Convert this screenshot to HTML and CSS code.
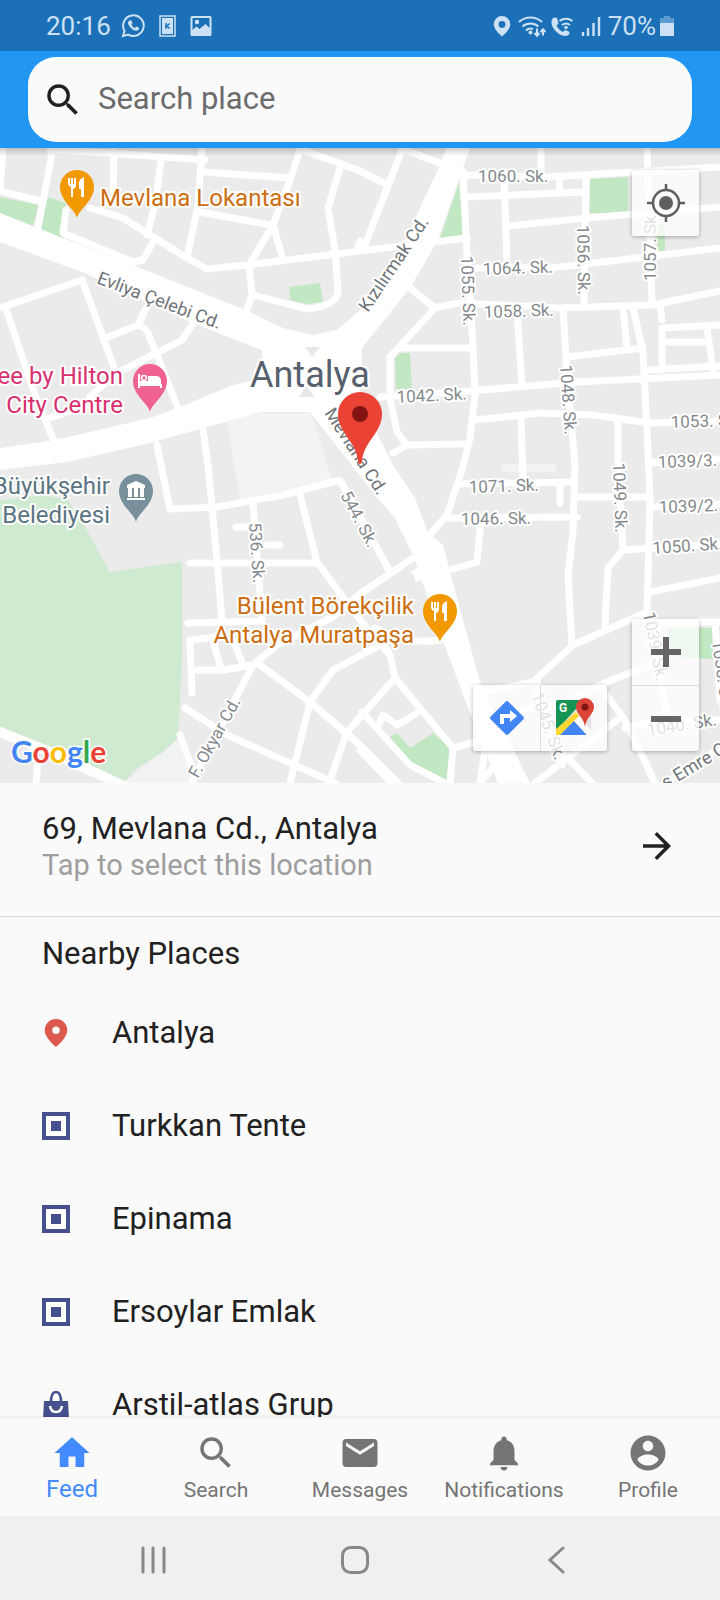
FILE: index.html
```html
<!DOCTYPE html>
<html lang="en">
<head>
<meta charset="utf-8">
<meta name="viewport" content="width=device-width, initial-scale=1">
<title>Search place</title>
<link rel="stylesheet" href="styles.css">
</head>
<body>
<div class="app">
  <div class="status">
    <div class="status-group">
      <span>20:16</span>
      <svg class="i24" viewBox="0 0 24 24" fill="none" stroke="currentColor"><path d="M2 22l1.500-5.200A10.300 10.300 0 1 1 7.300 20.600z" stroke-width="2"/><path d="M8.500 6.500c-2 1-2 3.500.5 6.500s5.500 4.500 7.500 3.500 1.700-2.700 1-3l-2-1-1.500 1.500c-1.500-.5-3-2-3.500-3.500L11.500 9l-1-2.200c-.4-.6-1.200-.6-2-.3z" fill="currentColor" stroke="none"/></svg>
      <svg class="i24" viewBox="0 0 24 24"><path d="M5 2h15v20H5z" fill="none" stroke="currentColor" stroke-width="1.500"/><path d="M7 4h11v16H7z" fill="currentColor"/><path d="M11 9v6M14.500 9.500L12 12l2.500 2.500" stroke="#1b70b8" stroke-width="1.500" fill="none"/></svg>
      <svg class="i24" viewBox="0 0 24 24"><path d="M3 2h18a1.500 1.500 0 0 1 1.500 1.500v17A1.500 1.500 0 0 1 21 22H3a1.500 1.500 0 0 1-1.500-1.500v-17A1.500 1.500 0 0 1 3 2zm.5 2v12l4-3.500 3 2.500 6-5 4 4V4z" fill="currentColor" fill-rule="evenodd"/><circle cx="8" cy="8" r="2.200" fill="currentColor"/></svg>
    </div>
    <div class="status-group status-right">
      <svg class="i24" viewBox="0 0 24 24"><path d="M12 2a8.300 8.300 0 0 0-8.300 8.300C3.700 16 12 22.500 12 22.500s8.300-6.500 8.300-12.200A8.300 8.300 0 0 0 12 2zm0 5a3.400 3.400 0 1 1 0 6.800A3.400 3.400 0 0 1 12 7z" fill="currentColor" fill-rule="evenodd"/></svg>
      <svg class="i28" viewBox="0 0 28 24" fill="none" stroke="currentColor" stroke-width="2"><path d="M1 8a17 17 0 0 1 23 0M4.500 12.500a12 12 0 0 1 16 0M8 16.500a7 7 0 0 1 7-1.500"/><circle cx="12.500" cy="18.500" r="2" fill="currentColor" stroke="none"/><path d="M19 14.500v7m-2.500-2.500 2.500 2.700 2.500-2.700M25 21.500v-6m-2.500 2.500 2.500-2.700 2.500 2.700"/></svg>
      <svg class="i24" viewBox="0 0 24 24"><path d="M4 3.500C0 6 1 12 5.500 17S16.500 23.500 19.500 20l-.5-2.500-4-1.500-2 2C10 16.500 7.500 14 6.500 11.500l2-2L7 4z" fill="currentColor"/><path d="M9.500 7a11 11 0 0 1 13 0M12 11a6.500 6.500 0 0 1 8 0" stroke="currentColor" stroke-width="2" fill="none"/><circle cx="16" cy="13.500" r="1.800" fill="currentColor"/></svg>
      <svg class="i24" viewBox="0 0 24 24" stroke="currentColor" stroke-width="2.400"><path d="M5 22v-4M10 22v-8M15.500 22V9M21 22V3"/></svg>
      <span class="battery-text">70%</span>
      <svg class="battery" viewBox="0 0 14 24"><path d="M4 2h6v2h4v5H0V4h4z" fill="#5b9bd2"/><path d="M0 9h14v12a1 1 0 0 1-1 1H1a1 1 0 0 1-1-1z" fill="currentColor"/></svg>
    </div>
  </div>

  <header class="header">
    <label class="search">
      <svg class="i42" viewBox="0 0 24 24"><path fill="currentColor" d="M15.500 14h-.79l-.28-.27A6.470 6.470 0 0 0 16 9.500 6.500 6.500 0 1 0 9.500 16c1.610 0 3.090-.59 4.230-1.570l.27.28v.79l5 4.990L20.490 19l-4.990-5zm-6 0C7.010 14 5 11.990 5 9.500S7.010 5 9.500 5 14 7.010 14 9.500 11.990 14 9.500 14z"/></svg>
      <input type="text" placeholder="Search place" aria-label="Search place">
    </label>
  </header>

  <section class="map" aria-label="Map">
    <svg class="map-canvas" viewBox="0 148 720 635" preserveAspectRatio="xMidYMid slice">
      <defs>
        <g id="pin"><path d="M0 31C-2 22-17 14-17 0A17 17 0 0 1 17 0C17 14 2 22 0 31z"/></g>
        <g id="food" fill="#fff"><path d="M-9-9h2v6h1v-6h2v6h1v-6h2v7q0 3-3 4v8h-2V0q-3-1-3-4zM2-4q0-4 5-6v20H4V2H2z"/></g>
      </defs>
      <rect y="148" width="720" height="635" fill="#ebebeb"/>
      <path fill="#f1f3f4" d="M227 420L260 413H312L332 480 240 500zM123 783L180 738 192 783zM502 464H556V472H502z"/>
      <path fill="#ceead0" d="M0 500L43 495 68 500 85 527 110 572 182 562V660L178 738 163 752 137 768 123 783 0 732z"/>
      <path fill="#c1e7c3" d="M0 197L38 205 33 226 0 214zM48 197L66 203 60 228 64 240 38 230zM289 287L320 283 323 302 307 304 290 300zM590 179L628 177V213H590zM657 225H665V251H657zM395 358L400 353H410L412 389H396zM459 183L440 238 463 236zM667 628H713L715 659 673 657zM397 733L410 748 433 733 450 748 446 783 407 762 390 737z"/>
      <g fill="none" stroke="#fff" stroke-width="7" stroke-linejoin="round" stroke-linecap="round">
        <path d="M3 148L0 190M53 148L38 228M0 191L40 201M50 150L110 153 205 160M114 152L113 190M161 160L155 205 147 235M202 148L198 205 187 258M203 172L290 178M200 212L270 225"/>
        <path d="M90 208L123 218 187 258 207 269 247 265 360 251 467 238M300 150L290 180 273 225 249 265 252 295 246 312M273 225L282 256M303 150L360 171 384 183M340 168L328 208 335 250 338 292Q336 306 307 309L253 295M66 210L63 233 133 262 143 260 154 240M360 241L357 250"/>
        <path d="M0 308L82 280 115 370M7 312L35 395 54 441M108 337L138 325Q148 328 150 338L178 408M138 325L146 308M90 397L115 374 182 340 192 325M50 418L100 400"/>
        <path d="M203 430L208 465 217 560 222 622M157 445L162 470 170 509 217 507 283 495 340 480 390 572M190 563H317M300 495L317 562 360 620 390 655M253 503L262 621M236 527H250M266 545H280M188 623L262 621"/>
        <path d="M192 693L190 640 215 637M213 642L221 668M197 670H223L253 665M233 640L243 665M192 782L253 665 277 645 333 617 360 594 413 558M257 663L310 702 360 745 398 783M185 708L227 735 335 783M290 783L310 702 333 670 390 640M330 780L347 732 395 678 390 655 375 630M375 628Q405 645 440 640M180 735L192 768M38 762L36 783"/>
        <path d="M362 712L410 765 445 783M395 678L453 748 450 783M453 748L490 738M377 728L383 715 397 725 417 713M485 750L480 783M360 750L395 787M495 765L480 783"/>
        <path d="M402 150L363 250M405 150L440 163M463 172L467 255 473 345 475 395 470 438 462 470 447 515 427 538M463 175L547 177 720 167M541 148V175M647 148L652 302M468 197L583 192M560 178L559 192M504 178L507 262M508 226L587 218 720 207M586 175L584 305M477 268L560 267 720 248"/>
        <path d="M432 308L460 303 560 308 653 305 720 291M410 288L435 308 390 357 390 398 397 432 407 445 393 453M400 348H470M380 397L470 391 577 382 720 375M407 445L467 444M517 312L522 385M563 308L567 375 575 465 573 532 568 575 572 645M567 357L643 348M623 308L627 348M633 308L643 352 648 450 650 500 648 578 647 612"/>
        <path d="M475 420L540 413 593 415 650 423 720 421M521 418L523 480M618 420V465L623 550 608 568 605 625M660 305L662 320M662 328L720 325M662 342H707M662 328V370M707 328L713 370M647 370L720 366M458 484L573 482M560 484V503M447 518L577 517M481 520L477 562 443 572M577 497H650M623 550L720 544M650 592L720 578M650 507L720 504M650 463L720 459"/>
        <path d="M478 693L533 682 573 645 647 612M537 680L547 730 562 765M500 712L560 705 607 682 650 665M603 690L625 720 655 783M535 783L620 718M565 755L592 783M650 622H720M650 622L668 720M625 728L665 720H720M655 790L720 748M715 622L720 700"/>
        <path stroke-width="10" d="M0 732L55 754 128 788"/>
      </g>
      <g fill="#fff">
        <path d="M0 213L63 238 130 264 250 312 283 328 313 335 337 330 360 310 397 258 440 165 446 148H470L438 240 410 288 362 348 360 400 393 465 415 498 428 533 443 545 457 598 480 682 530 783H498L467 705 442 638 413 555 395 518 375 495 310 412H260L150 443 67 462 0 470V448L55 440 150 418 180 407 233 385 262 378V350L190 322 82 272 0 242z"/>
        <path d="M411 571L420 567 427 578 416 582z"/>
      </g>
      <path fill="#e8e8e8" d="M305 347H320L312 357zM299 397H315L306 386z"/>

      <g class="street">
        <text transform="translate(96 283) rotate(20.700)" class="avenue">Evliya Çelebi Cd.</text>
        <text transform="translate(368 313) rotate(-56)" class="avenue">Kızılırmak Cd.</text>
        <text transform="translate(324 413) rotate(57)" class="avenue">Mevlana Cd.</text>
        <text transform="translate(198 779) rotate(-61)">F. Okyar Cd.</text>
        <text transform="translate(666 789) rotate(-31)" class="avenue">s Emre Cd.</text>
        <text transform="translate(478 182)">1060. Sk.</text>
        <text transform="translate(483 275) rotate(-2)">1064. Sk.</text>
        <text transform="translate(484 318) rotate(-2)">1058. Sk.</text>
        <text transform="translate(397 403) rotate(-3)">1042. Sk.</text>
        <text transform="translate(469 493) rotate(-2)">1071. Sk.</text>
        <text transform="translate(461 525) rotate(-1)">1046. Sk.</text>
        <text transform="translate(671 428) rotate(-2)">1053. Sk.</text>
        <text transform="translate(658 468) rotate(-2)">1039/3. Sk.</text>
        <text transform="translate(659 513) rotate(-2)">1039/2. Sk.</text>
        <text transform="translate(653 554) rotate(-4)">1050. Sk.</text>
        <text transform="translate(461 256) rotate(88)">1055. Sk.</text>
        <text transform="translate(577 225) rotate(89)">1056. Sk.</text>
        <text transform="translate(656 281) rotate(-90)">1057. Sk.</text>
        <text transform="translate(560 365) rotate(86)">1048. Sk.</text>
        <text transform="translate(613 463) rotate(88)">1049. Sk.</text>
        <text transform="translate(249 523) rotate(86)">536. Sk.</text>
        <text transform="translate(340 495) rotate(62)">544. Sk.</text>
        <text transform="translate(531 695) rotate(70)">1045. Sk.</text>
        <text transform="translate(643 613) rotate(79)">1039. Sk.</text>
        <text transform="translate(648 736) rotate(-9)">1040. Sk.</text>
        <text transform="translate(712 641) rotate(82)">1038. Sk.</text>
      </g>

      <g class="poi">
        <text x="100" y="206" fill="#cc6d12">Mevlana Lokantası</text>
        <text x="123" y="384" text-anchor="end" fill="#d8306f">ee by Hilton</text>
        <text x="123" y="413" text-anchor="end" fill="#d8306f">City Centre</text>
        <text x="110" y="494" text-anchor="end" fill="#5a7482">Büyükşehir</text>
        <text x="110" y="523" text-anchor="end" fill="#5a7482">Belediyesi</text>
        <text x="414" y="614" text-anchor="end" fill="#cc6d12">Bülent Börekçilik</text>
        <text x="414" y="643" text-anchor="end" fill="#cc6d12">Antalya Muratpaşa</text>
        <text x="250" y="387" class="city">Antalya</text>
      </g>

      <g transform="translate(77 187)"><use href="#pin" fill="#f29900"/><use href="#food"/></g>
      <g transform="translate(440 611)"><use href="#pin" fill="#f29900"/><use href="#food"/></g>
      <g transform="translate(150 381)"><use href="#pin" fill="#f06292"/><path d="M-11-7v14M-11 4H11V7" stroke="#fff" stroke-width="2" fill="none"/><path d="M-11 0H11V4H-11zM-2-5H6Q11-5 11 0H-2z" fill="#fff"/><circle cx="-6" cy="-3" r="2.500" fill="none" stroke="#fff" stroke-width="1.500"/></g>
      <g transform="translate(136 491)"><use href="#pin" fill="#78909c"/><path d="M0-10L9-6V-3H-9V-6zM-8-3H-4V6H-8zM-2-3H2V6H-2zM4-3H8V6H4zM-9 7H9V9H-9z" fill="#fff"/></g>
      <path d="M358 462C357 442 338 433 338 414A22 22 0 0 1 382 414C382 433 363 442 362 462Q360 466 358 462z" fill="#ea4335"/>
      <circle cx="360" cy="414" r="8" fill="#811411"/>
      <text x="11" y="763" class="google"><tspan fill="#4285f4">G</tspan><tspan fill="#ea4335">o</tspan><tspan fill="#fbbc04">o</tspan><tspan fill="#4285f4">g</tspan><tspan fill="#34a853">l</tspan><tspan fill="#ea4335">e</tspan></text>
    </svg>

    <div class="map-panel locate">
      <button type="button" aria-label="My location"><svg class="i42" viewBox="0 0 42 42" fill="none" stroke="#5f5f5f" stroke-width="2.500"><circle cx="21" cy="21" r="13"/><path d="M21 2v6M21 34v6M2 21h6M34 21h6"/><circle cx="21" cy="21" r="7" fill="#5f5f5f" stroke="none"/></svg></button>
    </div>
    <div class="map-panel zoom">
      <button type="button" aria-label="Zoom in"><svg class="i42" viewBox="0 0 42 42"><path d="M6 21h30M21 6v30" stroke="#666" stroke-width="6"/></svg></button>
      <button type="button" aria-label="Zoom out"><svg class="i42" viewBox="0 0 42 42"><path d="M6 21h30" stroke="#666" stroke-width="6"/></svg></button>
    </div>
    <div class="map-panel links">
      <button type="button" aria-label="Directions"><svg class="i42" viewBox="0 0 42 42"><rect x="8.500" y="8.500" width="25" height="25" rx="2" transform="rotate(45 21 21)" fill="#4285f4"/><path d="M16 27v-8h9" fill="none" stroke="#fff" stroke-width="4"/><path d="M24 13l7 6-7 6z" fill="#fff"/></svg></button>
      <button type="button" aria-label="Open in Google Maps"><svg class="i42" viewBox="0 0 42 42"><path d="M3 5a2 2 0 0 1 2-2h33v35H3z" fill="#e4e4e4"/><path d="M3 5a2 2 0 0 1 2-2h26L3 34z" fill="#159454"/><path d="M3 32L23 15l4 5L7 38H3z" fill="#fdd835"/><path d="M7 38L21 24 34 38z" fill="#4285f4"/><path d="M21 24L26 19 38 33V38H34z" fill="#fafafa"/><text x="6" y="15" class="g-mark">G</text><path d="M32 30C31 20 23 17 23 10A9 9 0 0 1 41 10C41 17 33 20 32 30z" fill="#db4437"/><circle cx="32" cy="10" r="3.500" fill="#811411"/></svg></button>
    </div>
  </section>

  <button type="button" class="selected">
    <span class="selected-text">
      <span class="selected-title">69, Mevlana Cd., Antalya</span>
      <span class="selected-hint">Tap to select this location</span>
    </span>
    <svg class="i42" viewBox="0 0 24 24"><path fill="currentColor" d="M12 4l-1.410 1.410L16.170 11H4v2h12.170l-5.580 5.590L12 20l8-8z"/></svg>
  </button>

  <main class="nearby">
    <h1>Nearby Places</h1>
    <ul>
      <li><svg class="i28" viewBox="0 0 28 28"><path d="M14 0A11.300 11.300 0 0 0 2.700 11.300C2.700 19 14 28 14 28s11.300-9 11.300-16.700A11.300 11.300 0 0 0 14 0zm0 7.500a3.800 3.800 0 1 1 0 7.600 3.800 3.800 0 0 1 0-7.600z" fill="#db5a4d" fill-rule="evenodd"/></svg><span>Antalya</span></li>
      <li><svg class="i28" viewBox="0 0 28 28"><path d="M2 2h24v24H2z" fill="#fff" stroke="#46508f" stroke-width="4"/><path d="M9 9h10v10H9z" fill="#46508f"/></svg><span>Turkkan Tente</span></li>
      <li><svg class="i28" viewBox="0 0 28 28"><path d="M2 2h24v24H2z" fill="#fff" stroke="#46508f" stroke-width="4"/><path d="M9 9h10v10H9z" fill="#46508f"/></svg><span>Epinama</span></li>
      <li><svg class="i28" viewBox="0 0 28 28"><path d="M2 2h24v24H2z" fill="#fff" stroke="#46508f" stroke-width="4"/><path d="M9 9h10v10H9z" fill="#46508f"/></svg><span>Ersoylar Emlak</span></li>
      <li><svg class="i28" viewBox="0 0 28 28"><path d="M2 10h24l1 18H1z" fill="#46508f"/><path d="M9 11Q9 1 14 1t5 10" fill="none" stroke="#46508f" stroke-width="2.500"/><path d="M8 15q1 6 6 6t6-6" fill="none" stroke="#fff" stroke-width="2.500"/></svg><span>Arstil-atlas Grup</span></li>
    </ul>
  </main>

  <nav class="tabs">
    <a href="#feed" class="active"><svg class="i42" viewBox="0 0 24 24"><path fill="currentColor" d="M10 20v-6h4v6h5v-8h3L12 3 2 12h3v8z"/></svg><span>Feed</span></a>
    <a href="#search"><svg class="i42" viewBox="0 0 24 24"><path fill="currentColor" d="M15.500 14h-.79l-.28-.27A6.470 6.470 0 0 0 16 9.500 6.500 6.500 0 1 0 9.500 16c1.610 0 3.090-.59 4.230-1.570l.27.28v.79l5 4.990L20.490 19l-4.990-5zm-6 0C7.010 14 5 11.990 5 9.500S7.010 5 9.500 5 14 7.010 14 9.500 11.990 14 9.500 14z"/></svg><span>Search</span></a>
    <a href="#messages"><svg class="i42" viewBox="0 0 24 24"><path fill="currentColor" d="M20 4H4c-1.100 0-1.990.9-1.990 2L2 18c0 1.100.9 2 2 2h16c1.100 0 2-.9 2-2V6c0-1.100-.9-2-2-2zm0 4l-8 5-8-5V6l8 5 8-5v2z"/></svg><span>Messages</span></a>
    <a href="#notifications"><svg class="i42" viewBox="0 0 24 24"><path fill="currentColor" d="M12 22c1.100 0 2-.9 2-2h-4c0 1.100.89 2 2 2zm6-6v-5c0-3.070-1.640-5.640-4.500-6.320V4c0-.83-.67-1.500-1.500-1.500s-1.500.67-1.500 1.500v.68C7.630 5.360 6 7.920 6 11v5l-2 2v1h16v-1l-2-2z"/></svg><span>Notifications</span></a>
    <a href="#profile"><svg class="i42" viewBox="0 0 24 24"><path fill="currentColor" d="M12 2C6.480 2 2 6.480 2 12s4.480 10 10 10 10-4.480 10-10S17.520 2 12 2zm0 3c1.660 0 3 1.340 3 3s-1.340 3-3 3-3-1.340-3-3 1.340-3 3-3zm0 14.200c-2.500 0-4.710-1.280-6-3.220.03-1.990 4-3.080 6-3.080 1.990 0 5.970 1.090 6 3.080-1.290 1.940-3.500 3.220-6 3.220z"/></svg><span>Profile</span></a>
  </nav>

  <div class="sysnav">
    <button type="button" aria-label="Recent apps"><svg class="i28" viewBox="0 0 28 28"><path d="M4 2v24M14 2v24M25 2v24" stroke="currentColor" stroke-width="3" stroke-linecap="round"/></svg></button>
    <button type="button" aria-label="Home"><svg class="i28" viewBox="0 0 28 28"><rect x="1.500" y="1.500" width="25" height="25" rx="8" fill="none" stroke="currentColor" stroke-width="3"/></svg></button>
    <button type="button" aria-label="Back"><svg class="i28" viewBox="0 0 28 28"><path d="M20 2L7 14l13 12" fill="none" stroke="currentColor" stroke-width="3" stroke-linecap="round"/></svg></button>
  </div>
</div>
</body>
</html>
```

FILE: styles.css
```css
* {
  box-sizing: border-box;
}

body {
  margin: 0;
  font-family: Roboto, "Liberation Sans", sans-serif;
  color: #212121;
  background: #fafafa;
}

button {
  padding: 0;
  border: 0;
  background: none;
  font: inherit;
  color: inherit;
}

svg {
  display: block;
  flex: none;
}

.i24 {
  width: 24px;
  height: 24px;
}

.i28 {
  width: 28px;
  height: 28px;
}

.i42 {
  width: 42px;
  height: 42px;
}

.app {
  display: flex;
  flex-direction: column;
  height: 100vh;
}

.status {
  display: flex;
  justify-content: space-between;
  align-items: center;
  height: 51px;
  padding: 0 46px;
  background: #1b70b8;
  color: #cce1f4;
  font-size: 26px;
  line-height: 32px;
}

.status-group {
  display: flex;
  align-items: center;
  gap: 10px;
}

.status-right {
  gap: 4px;
}

.battery-text {
  margin-left: 2px;
}

.battery {
  width: 14px;
  height: 24px;
}

.header {
  padding: 6px 28px;
  background: #2196f3;
}

.search {
  display: flex;
  align-items: center;
  gap: 14px;
  height: 85px;
  padding: 0 14px;
  border-radius: 28px;
  background: #fafafa;
}

.search input {
  flex: 1;
  min-width: 0;
  padding: 0 0 2px;
  border: 0;
  outline: 0;
  background: none;
  font: 31px/40px Roboto, "Liberation Sans", sans-serif;
  color: #212121;
}

.search input::placeholder {
  color: #6b6b6b;
  opacity: 1;
}

.map {
  position: relative;
  flex: none;
  aspect-ratio: 720 / 635;
  overflow: hidden;
}

.map::after {
  content: "";
  position: absolute;
  inset: 0 0 auto;
  height: 8px;
  background: linear-gradient(rgba(0, 0, 0, 0.2), transparent);
}

.map-canvas {
  width: 100%;
  height: 100%;
}

.street text {
  font-size: 17px;
  fill: #85898d;
  stroke: #fff;
  stroke-width: 4px;
  stroke-linejoin: round;
  paint-order: stroke;
}

.street .avenue {
  font-size: 18px;
  fill: #6f7479;
}

.poi text {
  font-size: 24px;
  stroke: #fff;
  stroke-width: 4px;
  stroke-linejoin: round;
  paint-order: stroke;
}

.poi .city {
  font-size: 36px;
  fill: #57606c;
}

.google {
  font: 700 30px Lato, sans-serif;
  stroke: #fff;
  stroke-width: 3px;
  paint-order: stroke;
}

.g-mark {
  font: 700 12px Roboto, sans-serif;
  fill: #fff;
}

.map-panel {
  position: absolute;
  display: flex;
  border-radius: 3px;
  background: rgba(255, 255, 255, 0.75);
  box-shadow: 0 1px 4px rgba(0, 0, 0, 0.3);
}

.map-panel button {
  display: grid;
  place-items: center;
  width: 67px;
  height: 66px;
}

.locate {
  top: 22px;
  right: 21px;
}

.zoom {
  right: 21px;
  bottom: 32px;
  flex-direction: column;
}

.zoom button + button {
  border-top: 1px solid #dcdcdc;
}

.links {
  right: 113px;
  bottom: 32px;
}

.links button + button {
  border-left: 1px solid #dcdcdc;
}

.selected {
  display: flex;
  flex: none;
  justify-content: space-between;
  align-items: flex-start;
  padding: 28px 42px 33px;
  border-bottom: 1px solid #dcdcdc;
  text-align: left;
}

.selected .i42 {
  margin-top: 14px;
}

.selected-text {
  display: flex;
  flex-direction: column;
}

.selected-title {
  font-size: 31px;
  line-height: 36px;
}

.selected-hint {
  font-size: 29px;
  line-height: 36px;
  color: #9e9e9e;
}

.nearby {
  flex: 1;
  min-height: 0;
  overflow: hidden;
}

.nearby h1 {
  margin: 0;
  padding: 19px 42px 14px;
  font-size: 31px;
  font-weight: 400;
  line-height: 36px;
}

.nearby ul {
  margin: 0;
  padding: 0;
  list-style: none;
}

.nearby li {
  display: flex;
  align-items: center;
  gap: 42px;
  height: 93px;
  padding: 0 42px;
  font-size: 31px;
  line-height: 36px;
}

.tabs {
  display: grid;
  flex: none;
  grid-template-columns: repeat(5, 1fr);
  height: 99px;
  border-top: 1px solid #efefef;
  background: #fafafa;
  box-shadow: 0 -1px 2px rgba(0, 0, 0, 0.05);
}

.tabs a {
  display: flex;
  flex-direction: column;
  align-items: center;
  padding-top: 14px;
  color: #757575;
  font-size: 21px;
  line-height: 32px;
  text-decoration: none;
}

.tabs .active {
  color: #448aff;
  font-size: 24px;
  line-height: 30px;
}

.sysnav {
  display: grid;
  flex: none;
  grid-template-columns: repeat(3, 1fr);
  height: 84px;
  padding: 4px 62px 0 52px;
  background: #f0f0f0;
  color: #888;
}

.sysnav button {
  display: grid;
  place-items: center;
}
```
